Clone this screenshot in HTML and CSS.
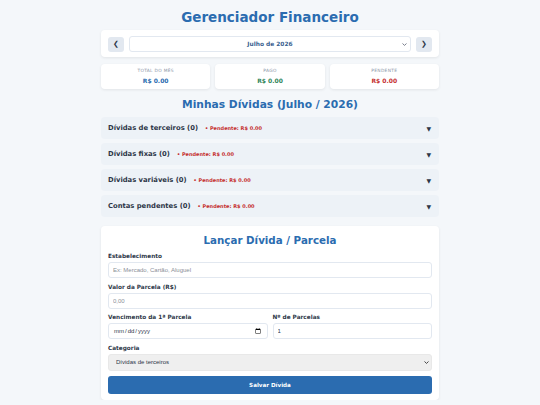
FILE: index.html
```html
<!DOCTYPE html>
<html lang="pt-BR">
<head>
<meta charset="utf-8">
<title>Gerenciador Financeiro</title>
<link rel="stylesheet" href="styles.css">
</head>
<body>
<div class="container">
  <h1 class="title">Gerenciador Financeiro</h1>

  <div class="card month-nav">
    <button class="nav-btn" type="button">&#10094;</button>
    <div class="select-wrap month-wrap">
      <select class="month-select">
        <option>Julho de 2026</option>
      </select>
      <svg class="chev" width="5" height="3" viewBox="0 0 5 3"><path d="M0.5 0.5 L2.5 2.4 L4.5 0.5" fill="none" stroke="#6b7280" stroke-width="0.9"/></svg>
    </div>
    <button class="nav-btn" type="button">&#10095;</button>
  </div>

  <div class="summary">
    <div class="card sum-card">
      <div class="sum-label">TOTAL DO MÊS</div>
      <div class="sum-value blue">R$ 0.00</div>
    </div>
    <div class="card sum-card">
      <div class="sum-label">PAGO</div>
      <div class="sum-value green">R$ 0.00</div>
    </div>
    <div class="card sum-card">
      <div class="sum-label">PENDENTE</div>
      <div class="sum-value red">R$ 0.00</div>
    </div>
  </div>

  <h2 class="section-title">Minhas Dívidas (Julho / 2026)</h2>

  <div class="accordion">
    <div class="acc-item">
      <span class="acc-title">Dívidas de terceiros (0)</span>
      <span class="acc-pending">• Pendente: R$ 0.00</span>
      <span class="acc-arrow">▼</span>
    </div>
    <div class="acc-item">
      <span class="acc-title">Dívidas fixas (0)</span>
      <span class="acc-pending">• Pendente: R$ 0.00</span>
      <span class="acc-arrow">▼</span>
    </div>
    <div class="acc-item">
      <span class="acc-title">Dívidas variáveis (0)</span>
      <span class="acc-pending">• Pendente: R$ 0.00</span>
      <span class="acc-arrow">▼</span>
    </div>
    <div class="acc-item">
      <span class="acc-title">Contas pendentes (0)</span>
      <span class="acc-pending">• Pendente: R$ 0.00</span>
      <span class="acc-arrow">▼</span>
    </div>
  </div>

  <form class="card form-card">
    <h2 class="form-title">Lançar Dívida / Parcela</h2>
    <div class="group">
      <label class="lbl">Estabelecimento</label>
      <input class="field" type="text" placeholder="Ex: Mercado, Cartão, Aluguel">
    </div>
    <div class="group">
      <label class="lbl">Valor da Parcela (R$)</label>
      <input class="field" type="text" placeholder="0,00">
    </div>
    <div class="row">
      <div class="group">
        <label class="lbl">Vencimento da 1ª Parcela</label>
        <input class="field" type="date">
      </div>
      <div class="group">
        <label class="lbl">Nº de Parcelas</label>
        <input class="field" type="number" value="1">
      </div>
    </div>
    <div class="group">
      <label class="lbl">Categoria</label>
      <div class="select-wrap">
        <select class="field cat-select">
          <option>Dívidas de terceiros</option>
        </select>
        <svg class="chev cat-chev" width="5" height="3" viewBox="0 0 5 3"><path d="M0.5 0.5 L2.5 2.4 L4.5 0.5" fill="none" stroke="#333" stroke-width="0.9"/></svg>
      </div>
    </div>
    <button class="save-btn" type="button">Salvar Dívida</button>
  </form>
</div>
</body>
</html>
```

FILE: styles.css
```css
* { box-sizing: border-box; }

body {
  margin: 0;
  background: #f4f7fa;
  font-family: "DejaVu Sans", Verdana, sans-serif;
  color: #2d3748;
}

.container {
  width: 338px;
  margin: 0 auto;
}

.title {
  margin: 0 0 5px;
  padding-top: 9px;
  font-size: 13.5px;
  line-height: 16px;
  font-weight: bold;
  text-align: center;
  color: #2b6cb0;
}

.card {
  background: #fff;
  border-radius: 4px;
  box-shadow: 0 1px 3px rgba(0, 0, 0, 0.08);
}

.month-nav {
  display: flex;
  align-items: center;
  gap: 5px;
  padding: 6px 7px 5px;
}

.nav-btn {
  width: 16px;
  height: 15px;
  padding: 0;
  border: none;
  border-radius: 3px;
  background: #e2e8f0;
  color: #2d3748;
  font-family: "DejaVu Sans", sans-serif;
  font-size: 7px;
  line-height: 15px;
  font-weight: bold;
}

.select-wrap {
  position: relative;
}

.month-wrap {
  flex: 1;
}

.chev {
  position: absolute;
  right: 4px;
  top: 50%;
  margin-top: -1.5px;
  pointer-events: none;
}

.cat-chev {
  right: 3px;
}

.month-select {
  display: block;
  width: 100%;
  height: 16px;
  padding: 0 3px;
  border: 1px solid #e2e8f0;
  border-radius: 3px;
  background: #fff;
  color: #3b5f8f;
  font-family: "DejaVu Sans", sans-serif;
  font-size: 5.9px;
  font-weight: bold;
  text-align: center;
  text-align-last: center;
  -webkit-appearance: none;
  appearance: none;
}

.summary {
  display: grid;
  grid-template-columns: 1fr 1fr 1fr;
  gap: 5px;
  margin-top: 7px;
}

.sum-card {
  height: 25px;
  padding: 4px 4px;
  text-align: center;
}

.sum-label {
  font-size: 4.4px;
  line-height: 6px;
  letter-spacing: 0.3px;
  color: #8a94a6;
}

.sum-value {
  margin-top: 2px;
  font-size: 6px;
  line-height: 9px;
  font-weight: bold;
}

.blue { color: #2b6cb0; }
.green { color: #2f855a; }
.red { color: #c53030; }

.section-title {
  margin: 9px 0 0;
  font-size: 10.7px;
  line-height: 13px;
  font-weight: bold;
  text-align: center;
  color: #2b6cb0;
}

.accordion {
  display: flex;
  flex-direction: column;
  gap: 4px;
  margin-top: 6px;
}

.acc-item {
  display: flex;
  align-items: center;
  height: 22px;
  padding: 0 8px 0 7px;
  background: #edf2f7;
  border-radius: 4px;
}

.acc-title {
  font-size: 6.8px;
  font-weight: bold;
  color: #2d3748;
}

.acc-pending {
  margin-left: 7px;
  font-size: 5px;
  font-weight: bold;
  color: #c53030;
}

.acc-arrow {
  margin-left: auto;
  font-size: 6px;
  color: #2d3748;
}

.form-card {
  margin-top: 9px;
  padding: 8px 7px 6px;
}

.form-title {
  margin: 0 0 6px;
  font-size: 10.3px;
  line-height: 13px;
  font-weight: bold;
  text-align: center;
  color: #2b6cb0;
}

.group {
  margin-bottom: 5.7px;
}

.lbl {
  display: block;
  margin-bottom: 2px;
  font-size: 5.75px;
  line-height: 7px;
  font-weight: bold;
  color: #2d3748;
}

.field {
  display: block;
  width: 100%;
  height: 16px;
  padding: 0 4px;
  border: 1px solid #e2e8f0;
  border-radius: 3px;
  background: #fff;
  color: #2d3748;
  font-family: "Liberation Sans", Arial, sans-serif;
  font-size: 6px;
}

.field::placeholder {
  color: #8a8f98;
}

.row {
  display: grid;
  grid-template-columns: 1fr 1fr;
  gap: 5px;
}

.cat-select {
  height: 16.5px;
  padding: 0 7px;
  background: #efefef;
  border-color: #e8e8e8;
  -webkit-appearance: none;
  appearance: none;
}

.save-btn {
  display: block;
  width: 100%;
  height: 17.3px;
  padding: 0;
  border: none;
  border-radius: 3px;
  background: #2b6cb0;
  color: #fff;
  font-family: "DejaVu Sans", sans-serif;
  font-size: 5.6px;
  font-weight: bold;
}
```
